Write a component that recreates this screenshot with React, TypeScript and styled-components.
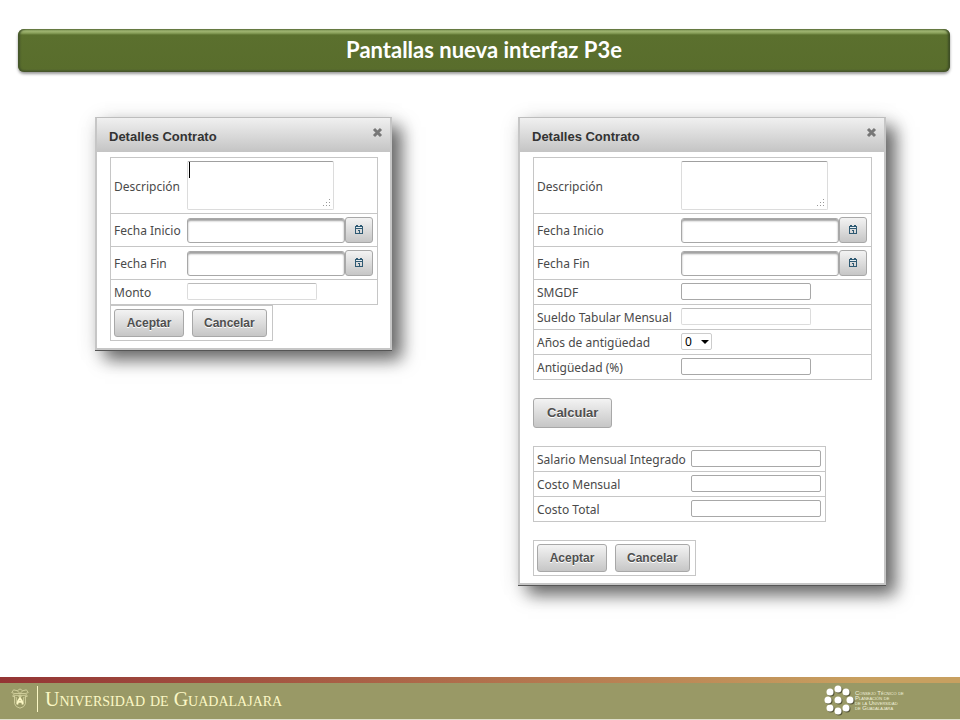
import React, { useId } from "react";
import styled, { createGlobalStyle, css } from "styled-components";

const GlobalStyle = createGlobalStyle`
  *, *::before, *::after { box-sizing: border-box; }
  body { margin: 0; background: #fff; }
  button, input, select, textarea { font: inherit; color: inherit; }
`;

const Page = styled.div`
  min-height: 100vh;
  display: flex;
  flex-direction: column;
  font-family: "Noto Sans", sans-serif;
`;

const Banner = styled.h1`
  margin: 29px 10px 0 18px;
  height: 43px;
  display: flex;
  align-items: center;
  justify-content: center;
  border-radius: 6px;
  background: linear-gradient(#7d9650 0, #a0b573 2px, #8ba25c 4px, #5b702e 6px, #596d2c 40px, #4a5830 43px);
  box-shadow: inset 2px 0 2px #44552a, inset -2px 0 2px #3f4e26, 0 2px 3px rgba(0, 0, 0, 0.4);
  color: #fff;
  font: bold 22px/26px Lato, sans-serif;
  padding-bottom: 2px;
`;

const Main = styled.main`
  flex: 1;
  display: flex;
  flex-wrap: wrap;
  justify-content: space-between;
  align-items: flex-start;
  gap: 40px;
  padding: 45px 74px 40px 95px;
`;

const Dialog = styled.section`
  background: #fff;
  border: 2px solid #c6c6c6;
  border-top: 1px solid #bdbdbd;
  border-bottom: 0;
  box-shadow: inset 0 -2px #c6c6c6, 0 1px #555, 10px 10px 16px rgba(0, 0, 0, 0.55), 2px 4px 20px rgba(0, 0, 0, 0.15);
`;

const DialogHeader = styled.header`
  height: 34px;
  display: flex;
  align-items: center;
  justify-content: space-between;
  padding: 3px 7px 0 12px;
  background: linear-gradient(#f0f0f0, #c4c4c4);
`;

const DialogTitle = styled.h2`
  margin: 0;
  color: #333;
  font: bold 13px/16px "Liberation Sans", sans-serif;
`;

const CloseButton = styled.button`
  display: flex;
  padding: 0;
  margin-bottom: 8px;
  border: 0;
  background: none;
  color: #777;
`;

const DialogBody = styled.form`
  display: flex;
  flex-direction: column;
  align-items: flex-start;
  padding: 5px 12px 9px 13px;
`;

const FieldTable = styled.table<{ $gap?: boolean }>`
  border-collapse: separate;
  border-spacing: 0;
  border: 1px solid #c6c6c6;
  color: #4a4a4a;
  font-size: 12px;
  line-height: 16px;
  ${(p) => p.$gap && css`margin-top: 18px;`}
  th, td { vertical-align: middle; text-align: left; font-weight: normal; }
  tr + tr > * { border-top: 1px solid #c6c6c6; }
`;

const LabelCell = styled.th<{ $width: number }>`
  width: ${(p) => p.$width}px;
  padding: 2px 0 0 3px;
  white-space: nowrap;
`;

const FieldCell = styled.td`
  padding: 3px 4px 4px 0;
`;

const TallCell = styled.td`
  padding: 3px 4px 3px 0;
`;

const TextField = styled.input<{ $faint?: boolean }>`
  display: block;
  width: 130px;
  height: 17px;
  padding: 0 3px;
  border: 1px solid ${(p) => (p.$faint ? "#dcdcdc" : "#a8a8a8")};
  border-top-color: ${(p) => (p.$faint ? "#bbb" : "#a8a8a8")};
  border-radius: 2px;
  background: #fff;
  outline: 0;
`;

const AreaWrap = styled.div`
  position: relative;
  width: 147px;
`;

const Area = styled.textarea`
  display: block;
  width: 100%;
  height: 49px;
  padding: 0 2px;
  border: 1px solid #dcdcdc;
  border-top-color: #a0a0a0;
  border-radius: 2px;
  resize: none;
  outline: 0;
`;

const Grip = styled.svg`
  position: absolute;
  right: 3px;
  bottom: 2px;
`;

const Caret = styled.span`
  position: absolute;
  left: 2px;
  top: 1px;
  width: 1px;
  height: 16px;
  background: #000;
`;

const DateGroup = styled.div`
  display: flex;
  align-items: center;
`;

const DateInput = styled.input`
  width: 158px;
  height: 25px;
  padding: 0 4px;
  border: 1px solid #a8a8a8;
  border-radius: 3px;
  box-shadow: inset 0 2px 2px #a0a0a0;
  outline: 0;
`;

const buttonFace = css`
  border: 1px solid #a8a8a8;
  border-radius: 3px;
  background: linear-gradient(#f3f3f3, #c6c6c6);
`;

const DateButton = styled.button`
  ${buttonFace}
  width: 28px;
  height: 26px;
  display: flex;
  align-items: center;
  justify-content: center;
  padding: 0;
`;

const Select = styled.select`
  display: block;
  width: 31px;
  height: 17px;
  padding: 0 0 0 3px;
  appearance: none;
  border: 1px solid #ccc;
  border-radius: 2px;
  background: #fff;
  color: #000;
  line-height: 14px;
`;

const SelectWrap = styled.div`
  position: relative;
  width: 31px;
`;

const Arrow = styled.svg`
  position: absolute;
  right: 3px;
  top: 7px;
  pointer-events: none;
`;

const Button = styled.button<{ $large?: boolean }>`
  ${buttonFace}
  height: ${(p) => (p.$large ? 30 : 28)}px;
  padding: 0 ${(p) => (p.$large ? 13 : 11)}px;
  color: #4f4f4f;
  font: bold ${(p) => (p.$large ? 13 : 12)}px/16px "Liberation Sans", sans-serif;
  text-shadow: 0 1px 0 #fff;
  ${(p) => p.$large && css`margin-top: 18px;`}
`;

const Actions = styled.div<{ $gap?: boolean }>`
  display: flex;
  gap: 8px;
  padding: 3px 5px 3px 3px;
  border: 1px solid #c6c6c6;
  ${(p) => p.$gap && css`margin-top: 18px;`}

  ${Button} { min-width: 70px; }
`;

const Footer = styled.footer`
  border-bottom: 1px solid #dfe0cc;
`;

const Stripe = styled.div`
  height: 6px;
  background: linear-gradient(90deg, #943434, #c8a060 90%);
`;

const FooterBar = styled.div`
  height: 36px;
  display: flex;
  align-items: center;
  justify-content: space-between;
  padding: 0 52px 0 10px;
  background: #999966;
`;

const Brand = styled.div`
  display: flex;
  align-items: center;
  padding-bottom: 4px;
  color: #fbf7c4;
`;

const BrandName = styled.span`
  margin-left: 7px;
  padding-left: 7px;
  border-left: 1px solid #fbf7c4;
  font: 20px/26px "Liberation Serif", serif;
  font-variant: small-caps;
  white-space: nowrap;
`;

const Council = styled.div`
  display: flex;
  align-items: center;
  color: #f0f0dc;
`;

const CouncilName = styled.div`
  width: 53px;
  padding-bottom: 1px;
  font: 6px/5px "Liberation Sans", sans-serif;
  font-variant: small-caps;
  white-space: nowrap;
`;

const CloseIcon = () => (
  <svg width="11" height="11" viewBox="0 0 11 11" aria-hidden="true">
    <path d="M2 2L9 9M9 2L2 9" stroke="currentColor" strokeWidth="3" />
  </svg>
);

const CalendarIcon = () => (
  <svg width="8" height="10" viewBox="0 0 8 10" aria-hidden="true">
    <path fill="#2f5a73" fillRule="evenodd" d="M0 1H1V0H3V1H5V0H7V1H8V9H0ZM1 4V8H7V4Z" />
    <path fill="#2f5a73" d="M3 5H5V8H4V6H3Z" />
    <path fill="#e6eef2" d="M1 2H7V3H1Z" />
  </svg>
);

function Description({ id, caret }: { id: string; caret?: boolean }) {
  return (
    <AreaWrap>
      <Area id={id} />
      {caret && <Caret />}
      <Grip width="9" height="9" viewBox="0 0 9 9" fill="#999" aria-hidden="true">
        <path d="M7 0h1v1h-1zM7 3h1v1h-1zM4 3h1v1h-1zM7 6h1v1h-1zM4 6h1v1h-1zM1 6h1v1h-1z" />
      </Grip>
    </AreaWrap>
  );
}

type Kind = "area" | "date" | "text" | "faint" | "select";
type Field = [label: string, kind: Kind];

function Fields({ fields, labelWidth, caret, gap }: { fields: Field[]; labelWidth: number; caret?: boolean; gap?: boolean }) {
  const base = useId();
  return (
    <FieldTable $gap={gap}>
      <tbody>
        {fields.map(([label, kind], i) => {
          const id = `${base}-${i}`;
          const Cell = kind === "date" || kind === "area" ? TallCell : FieldCell;
          return (
            <tr key={label}>
              <LabelCell scope="row" $width={labelWidth}>
                <label htmlFor={id}>{label}</label>
              </LabelCell>
              <Cell>
                {kind === "area" && <Description id={id} caret={caret} />}
                {kind === "date" && (
                  <DateGroup>
                    <DateInput id={id} />
                    <DateButton type="button" aria-label={`Calendario, ${label}`}>
                      <CalendarIcon />
                    </DateButton>
                  </DateGroup>
                )}
                {(kind === "text" || kind === "faint") && <TextField id={id} $faint={kind === "faint"} />}
                {kind === "select" && (
                  <SelectWrap>
                    <Select id={id}>
                      <option>0</option>
                    </Select>
                    <Arrow width="8" height="5" viewBox="0 0 8 5" aria-hidden="true">
                      <path d="M0 0H8L4 4Z" />
                    </Arrow>
                  </SelectWrap>
                )}
              </Cell>
            </tr>
          );
        })}
      </tbody>
    </FieldTable>
  );
}

function ContractDialog({ children }: { children: React.ReactNode }) {
  return (
    <Dialog role="dialog" aria-label="Detalles Contrato">
      <DialogHeader>
        <DialogTitle>Detalles Contrato</DialogTitle>
        <CloseButton type="button" aria-label="Cerrar">
          <CloseIcon />
        </CloseButton>
      </DialogHeader>
      <DialogBody>{children}</DialogBody>
    </Dialog>
  );
}

const DialogActions = ({ gap }: { gap?: boolean }) => (
  <Actions $gap={gap}>
    <Button type="button">Aceptar</Button>
    <Button type="button">Cancelar</Button>
  </Actions>
);

const Crest = () => (
  <svg width="20" height="22" viewBox="0 0 20 24" fill="none" stroke="currentColor" aria-hidden="true">
    <g opacity="0.6">
      <path d="M10 1L7 3L3 2L1 5L4 6L2 9L5 10M10 1L13 3L17 2L19 5L16 6L18 9L15 10M7 3L10 6L13 3M4 6H16" />
      <path d="M4 8V17Q5 21 10 22Q15 21 16 17V8ZM6 10V17M14 10V17" />
      <path d="M10 7V11M8 9H12" />
    </g>
    <path d="M7 18L8 14L10 11L12 14L13 18M8 15H12" strokeWidth="2" />
  </svg>
);

const dots = [[14, 4], [22, 7], [26, 15], [22, 23], [14, 26], [6, 23], [4, 15], [6, 7], [14, 15]];

const CouncilLogo = () => (
  <svg width="31" height="32" viewBox="0 0 31 32" aria-hidden="true">
    {dots.map(([x, y]) => (
      <g key={`${x}-${y}`}>
        <circle cx={x + 1} cy={y + 1} r="3.5" fill="#55553a" />
        <circle cx={x} cy={y} r="3.5" fill="#fff" />
      </g>
    ))}
  </svg>
);

export default function App() {
  return (
    <Page>
      <GlobalStyle />
      <Banner>Pantallas nueva interfaz P3e</Banner>
      <Main>
        <ContractDialog>
          <Fields
            caret
            labelWidth={76}
            fields={[["Descripción", "area"], ["Fecha Inicio", "date"], ["Fecha Fin", "date"], ["Monto", "faint"]]}
          />
          <DialogActions />
        </ContractDialog>
        <ContractDialog>
          <Fields
            labelWidth={147}
            fields={[
              ["Descripción", "area"],
              ["Fecha Inicio", "date"],
              ["Fecha Fin", "date"],
              ["SMGDF", "text"],
              ["Sueldo Tabular Mensual", "faint"],
              ["Años de antigüedad", "select"],
              ["Antigüedad (%)", "text"],
            ]}
          />
          <Button type="button" $large>Calcular</Button>
          <Fields
            gap
            labelWidth={157}
            fields={[["Salario Mensual Integrado", "text"], ["Costo Mensual", "text"], ["Costo Total", "text"]]}
          />
          <DialogActions gap />
        </ContractDialog>
      </Main>
      <Footer>
        <Stripe />
        <FooterBar>
          <Brand>
            <Crest />
            <BrandName>Universidad de Guadalajara</BrandName>
          </Brand>
          <Council>
            <CouncilLogo />
            <CouncilName>
              Consejo Técnico de<br />
              Planeación de<br />
              de la Universidad<br />
              de Guadalajara
            </CouncilName>
          </Council>
        </FooterBar>
      </Footer>
    </Page>
  );
}
